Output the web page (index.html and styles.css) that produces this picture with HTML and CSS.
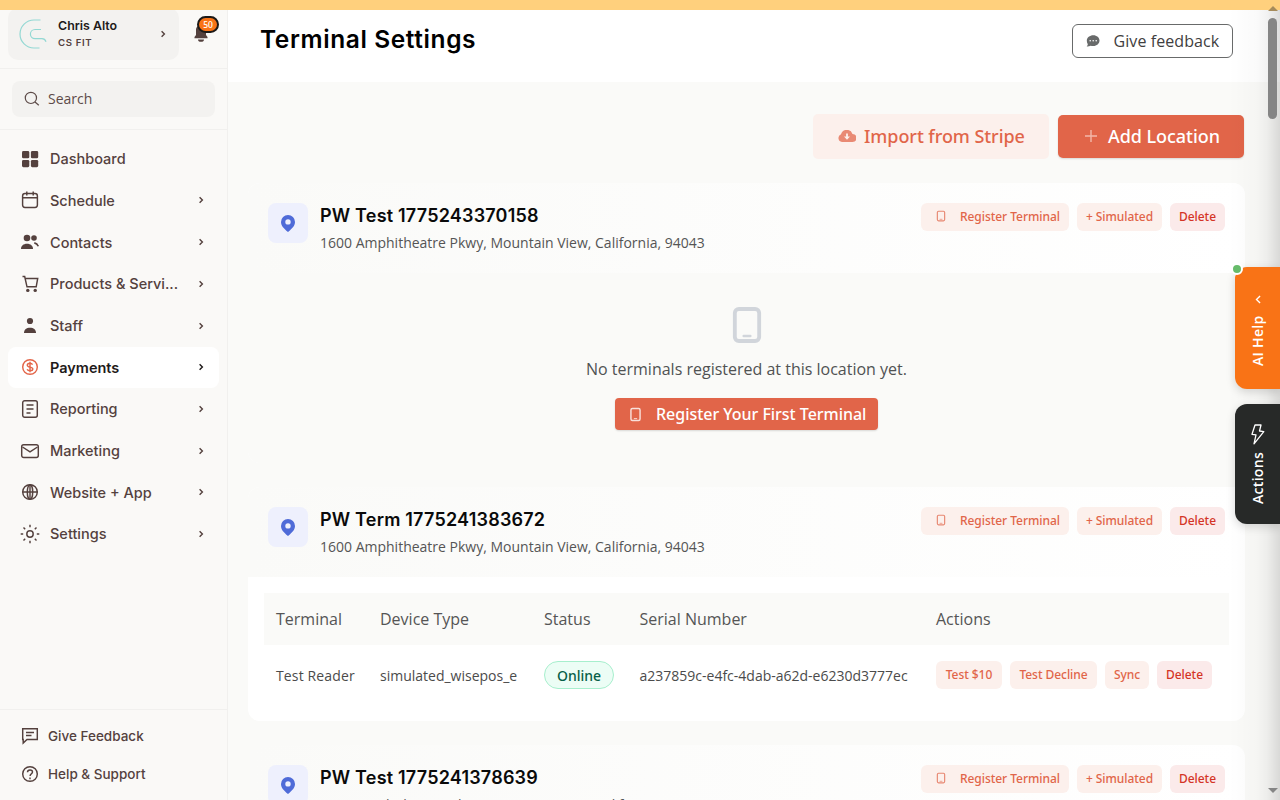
FILE: index.html
```
<!DOCTYPE html>
<html lang="en">
<head>
<meta charset="utf-8">
<title>Terminal Settings</title>
<link rel="stylesheet" href="styles.css">
</head>
<body>
<svg class="defs" aria-hidden="true">
  <symbol id="chev" viewBox="0 0 10 10"><path d="M3.6 2.2 6.4 5 3.6 7.8" fill="none" stroke="currentColor" stroke-width="1.4"/></symbol>
  <symbol id="tablet" viewBox="0 0 24 24"><rect x="4.7" y="2.4" width="14.600" height="19.200" rx="2.400" fill="none" stroke="currentColor" stroke-width="2.300"/><path d="M10 18.600h4" stroke="currentColor" stroke-width="1.500" stroke-linecap="round"/></symbol>
  <symbol id="pin" viewBox="0 0 14 17"><path fill-rule="evenodd" d="M7 0a7 7 0 0 0-7 7c0 3.600 2.400 6.200 7 10 4.600-3.800 7-6.400 7-10a7 7 0 0 0-7-7Zm0 4.200a2.700 2.700 0 1 1 0 5.400 2.700 2.700 0 0 1 0-5.400Z" fill="currentColor"/></symbol>
</svg>
<div class="banner"></div>
<div class="app">
  <aside class="sidebar">
    <div class="account">
      <div class="profile">
        <svg class="avatar" viewBox="0 0 30 30" fill="none" stroke="#93d8d3" stroke-width="1.200"><path d="M21.500 1H15a14 14 0 0 0 0 28h5.500"/><path d="M22 10.500h-6a4.600 4.600 0 0 0 0 9.200h7c2.500 0 3.500 1.500 4 3"/></svg>
        <div class="who"><b>Chris Alto</b><span>CS FIT</span></div>
        <svg class="chev"><use href="#chev"/></svg>
      </div>
      <div class="bell">
        <svg width="14" height="17" viewBox="0 0 14 17" fill="#54413e"><path d="M7 0c-3 0-5 2.200-5 5v5L.5 12v1.300h13V12L12 10V5c0-2.800-2-5-5-5ZM4 14.500h6a3 2.300 0 0 1-6 0Z"/></svg>
        <span class="count">50</span>
      </div>
    </div>
    <div class="searchwrap"><div class="search"><svg width="16" height="16" viewBox="0 0 16 16" fill="none" stroke="currentColor" stroke-width="1.200"><circle cx="6.900" cy="6.900" r="5.600"/><path d="m11 11 3.800 3.300"/></svg><span>Search</span></div></div>
    <nav class="nav">
      <a class="item"><svg viewBox="0 0 20 20"><g fill="currentColor"><rect x="2" y="2" width="7.300" height="7.300" rx="1.400"/><rect x="10.900" y="2" width="7.300" height="7.300" rx="1.400"/><rect x="2" y="10.900" width="7.300" height="7.300" rx="1.400"/><rect x="10.900" y="10.900" width="7.300" height="7.300" rx="1.400"/></g></svg><span>Dashboard</span></a>
      <a class="item"><svg viewBox="0 0 20 20"><rect x="2.600" y="3.500" width="14.800" height="14" rx="2.400"/><path d="M2.600 7.800h14.600M6.800 1.500v4M13.200 1.500v4"/></svg><span>Schedule</span><svg class="chev"><use href="#chev"/></svg></a>
      <a class="item"><svg viewBox="0 0 20 20"><g fill="currentColor" stroke="none"><circle cx="7" cy="6" r="3.300"/><circle cx="14" cy="6" r="2.800"/><path d="M1 17c0-3 2.300-5.200 6-5.200s6 2.200 6 5.200Z"/></g><path d="M14.300 10.900c2 .5 3.300 1.700 4 3.300" stroke-width="1.600"/></svg><span>Contacts</span><svg class="chev"><use href="#chev"/></svg></a>
      <a class="item"><svg viewBox="0 0 20 20"><path d="M2.500 2.500h2.200L7 12.800h9.200l1.500-8.300H5.200"/><g fill="currentColor" stroke="none"><circle cx="7.800" cy="16.400" r="1.700"/><circle cx="15.200" cy="16.400" r="1.700"/></g></svg><span>Products &amp; Servi...</span><svg class="chev"><use href="#chev"/></svg></a>
      <a class="item"><svg viewBox="0 0 20 20"><g fill="currentColor" stroke="none"><circle cx="10" cy="5" r="3.100"/><path d="M4 17c0-3.500 2.500-5.200 6-5.200s6 1.700 6 5.200Z"/></g></svg><span>Staff</span><svg class="chev"><use href="#chev"/></svg></a>
      <a class="item active"><svg viewBox="0 0 20 20"><circle cx="10" cy="10" r="7.300"/><path d="M10 4.800v10.400M12.600 7.600C12 6.700 11.200 6.300 10 6.300c-1.600 0-2.700.7-2.700 1.900 0 2.600 5.500 1.200 5.500 3.800 0 1.100-1.200 1.800-2.800 1.800-1.400 0-2.400-.5-2.900-1.500"/></svg><span>Payments</span><svg class="chev"><use href="#chev"/></svg></a>
      <a class="item"><svg viewBox="0 0 20 20"><rect x="2.700" y="1.700" width="14.600" height="16.600" rx="2"/><path d="M6.500 6h7M6.500 10h7M6.500 14h4"/></svg><span>Reporting</span><svg class="chev"><use href="#chev"/></svg></a>
      <a class="item"><svg viewBox="0 0 20 20"><rect x="1.700" y="3.700" width="16.600" height="12.800" rx="2"/><path d="m2.500 6 7.500 4.800L17.500 6"/></svg><span>Marketing</span><svg class="chev"><use href="#chev"/></svg></a>
      <a class="item"><svg viewBox="0 0 20 20"><circle cx="10" cy="10" r="7.300"/><ellipse cx="10" cy="10" rx="2.700" ry="7.300"/><path d="M2.700 10h14.600M10 2.700v14.600"/></svg><span>Website + App</span><svg class="chev"><use href="#chev"/></svg></a>
      <a class="item"><svg viewBox="0 0 20 20"><circle cx="10" cy="10" r="3.200"/><path d="M10 .7v2.500M10 16.800v2.500M.7 10h2.500M16.800 10h2.500M3.500 3.500l1.700 1.700M14.800 14.800l1.700 1.700M16.500 3.500l-1.700 1.700M5.200 14.800l-1.700 1.700"/></svg><span>Settings</span><svg class="chev"><use href="#chev"/></svg></a>
    </nav>
    <div class="foot">
      <a><svg viewBox="0 0 20 20"><path d="M2.700 2.700h14.600v10.800H7l-3.800 3.600v-3.600h-.5ZM6 6.500h8M6 9.500h5.500"/></svg><span>Give Feedback</span></a>
      <a><svg viewBox="0 0 20 20"><circle cx="10" cy="10" r="7.300"/><path d="M7.500 8.200C7.500 6.700 8.600 5.900 10 5.900s2.500.8 2.500 2.100c0 1.700-2.400 1.900-2.400 4M10 13.500v1.700"/></svg><span>Help &amp; Support</span></a>
    </div>
  </aside>
  <main class="main">
    <header class="top">
      <h1>Terminal Settings</h1>
      <button class="feedback"><svg width="14" height="12" viewBox="0 0 14 12"><path d="M7.300.3c3.500 0 6.200 2.300 6.200 5.300s-2.700 5.500-6.200 5.500c-1 0-1.900-.1-2.700-.4-1 .6-2.400.9-3.900.8.8-.7 1.100-1.500 1.100-2.200C1.100 8.300.8 7 .8 5.600.8 2.600 3.800.3 7.300.3Z" fill="#686a6a"/><g fill="#fff"><circle cx="4.200" cy="5.800" r=".8"/><circle cx="7.200" cy="5.800" r=".8"/><circle cx="10.200" cy="5.800" r=".8"/></g></svg><span>Give feedback</span></button>
    </header>
    <section class="content">
      <div class="tools">
        <button class="import"><svg width="18" height="12" viewBox="0 0 18 12"><path fill-rule="evenodd" d="M4 12a4 4 0 0 1-1-7.700A6 6 0 0 1 14.500 4a4 4 0 0 1 0 8ZM8.100 3.500v3H6l3 3.300 3-3.300H9.900v-3Z" fill="#e98a74"/></svg><span>Import from Stripe</span></button>
        <button class="add"><svg width="12" height="12" viewBox="0 0 12 12"><path d="M6 0v12M0 6h12" stroke="#f3b8aa" stroke-width="1.400"/></svg><span>Add Location</span></button>
      </div>
      <article class="card">
        <div class="cardhead">
          <div class="mark"><svg><use href="#pin"/></svg></div>
          <div class="place"><h2>PW Test 1775243370158</h2><p>1600 Amphitheatre Pkwy, Mountain View, California, 94043</p></div>
          <div class="acts"><button class="soft reg"><svg><use href="#tablet"/></svg>Register Terminal</button><button class="soft sim">+ Simulated</button><button class="soft del">Delete</button></div>
        </div>
        <div class="empty">
          <svg><use href="#tablet"/></svg>
          <p>No terminals registered at this location yet.</p>
          <button class="first"><svg><use href="#tablet"/></svg><span>Register Your First Terminal</span></button>
        </div>
      </article>
      <article class="card">
        <div class="cardhead">
          <div class="mark"><svg><use href="#pin"/></svg></div>
          <div class="place"><h2>PW Term 1775241383672</h2><p>1600 Amphitheatre Pkwy, Mountain View, California, 94043</p></div>
          <div class="acts"><button class="soft reg"><svg><use href="#tablet"/></svg>Register Terminal</button><button class="soft sim">+ Simulated</button><button class="soft del">Delete</button></div>
        </div>
        <div class="tablewrap">
          <div class="row head"><span>Terminal</span><span>Device Type</span><span>Status</span><span>Serial Number</span><span>Actions</span></div>
          <div class="row"><span class="reader">Test Reader</span><span>simulated_wisepos_e</span><span><i class="pill">Online</i></span><span>a237859c-e4fc-4dab-a62d-e6230d3777ec</span><span class="acts"><button class="soft t10">Test $10</button><button class="soft dec">Test Decline</button><button class="soft sync">Sync</button><button class="soft del">Delete</button></span></div>
        </div>
      </article>
      <article class="card">
        <div class="cardhead">
          <div class="mark"><svg><use href="#pin"/></svg></div>
          <div class="place"><h2>PW Test 1775241378639</h2><p>1600 Amphitheatre Pkwy, Mountain View, California, 94043</p></div>
          <div class="acts"><button class="soft reg"><svg><use href="#tablet"/></svg>Register Terminal</button><button class="soft sim">+ Simulated</button><button class="soft del">Delete</button></div>
        </div>
      </article>
    </section>
  </main>
</div>
<div class="edge"></div>
<div class="scroll"><i class="up"></i><i class="thumb"></i><i class="down"></i></div>
<div class="tab ai"><span>AI Help</span><svg width="9" height="9" viewBox="0 0 8 8"><path d="M2.600.8 5.800 4 2.600 7.200" fill="none" stroke="#fff" stroke-width="1.200"/></svg><i class="dot"></i></div>
<div class="tab dark"><span>Actions</span><svg class="bolt" width="14" height="21" viewBox="0 0 14 21"><path d="M4 1h6L8.500 7l4.300.6L3 19.800l2-9L1 10.300Z" fill="none" stroke="#fff" stroke-width="1.300" stroke-linejoin="round"/></svg></div>
</body>
</html>
```
FILE: styles.css
```
*{box-sizing:border-box}
body{margin:0;width:1280px;height:800px;overflow:hidden;position:relative;background:#fafaf8;font-family:"Open Sans","Noto Sans",sans-serif;color:#4b4b4b}
h1,h2,p{margin:0}
button{font-family:"Noto Sans",sans-serif;font-weight:500;border:0;margin:0;padding:0;display:flex;align-items:center;white-space:nowrap}
.defs{position:absolute;width:0;height:0}
.banner{position:absolute;inset:0 0 auto 0;height:10px;background:#ffd07d;z-index:5}
.app{display:flex;height:800px}
.sidebar{width:228px;flex:none;background:#faf9f7;border-right:1px solid #f1f0ee;display:flex;flex-direction:column;color:#54413e;font-family:Inter,sans-serif}
.account{height:69px;flex:none;border-bottom:1px solid #f1f0ee;padding:8px 0 0 8px;display:flex;gap:15px}
.profile{width:171px;height:52px;border-radius:10px;background:#f3f2f0;display:flex;align-items:center;padding:0 11px}
.avatar{width:30px;height:30px}
.who{margin-left:9px;flex:1;display:flex;flex-direction:column;gap:3px;padding-bottom:1px}
.who b{font-size:12.400px;line-height:16px;font-weight:600;color:#1f1b1a}
.who span{font-size:9.600px;line-height:12px;font-weight:600;letter-spacing:.65px}
.chev{width:10px;height:10px}
.bell{position:relative;padding-top:17px;height:40px}
.count{position:absolute;left:3px;top:8px;width:22px;height:17px;border:2px solid #1c1917;border-radius:9px;background:#f97316;color:#fff;font:500 8.500px/14px "Noto Sans",sans-serif;text-align:center}
.searchwrap{height:61px;flex:none;border-bottom:1px solid #f1f0ee;padding:12px}
.search{height:36px;width:203px;border-radius:8px;background:#f3f2f0;display:flex;align-items:center;gap:8px;padding-left:12px;font:14px "Open Sans",sans-serif;color:#5d4b48}
.search span{padding-bottom:2px}
.nav{padding:8.300px 8px 0;flex:1}
.item{display:flex;align-items:center;height:41px;margin-bottom:.7px;border-radius:8px;padding:0 13px 0 12px;font-size:14.500px;font-weight:500}
.item>svg:first-child,.foot svg{width:20px;height:20px;margin-right:10px;fill:none;stroke:currentColor;stroke-width:1.450}
.item>svg:first-child g{stroke:none}
.item span{flex:1;white-space:nowrap}
.active{background:#fff;color:#1f1b1a;font-weight:600}
.item.active>svg:first-child{color:#e3664a}
.foot{height:91px;flex:none;border-top:1px solid #f1f0ee;padding:7px 20px}
.foot a{display:flex;height:38px;align-items:center;font-size:13.500px;font-weight:500}
.foot span{padding-bottom:1px}
.foot svg{margin-right:8px}
.main{flex:1;min-width:0}
.top{height:82px;background:#fff;display:flex;justify-content:space-between;padding:24px 47px 0 32px}
.top h1{font:600 24.500px/30px Inter,sans-serif;letter-spacing:.6px;color:#000}
.feedback{width:161px;height:34px;border:1px solid #686a6a;border-radius:6px;background:#fff;padding-left:13px;gap:13.500px;font:16px "Open Sans",sans-serif;letter-spacing:.08px;color:#3f4040}
.content{padding:31px 35px 0 20px}
.tools{display:flex;justify-content:flex-end;align-items:center;gap:9px;padding-right:1px;height:46px;margin-bottom:24px}
.tools button{font-size:18px;letter-spacing:-.06px;border-radius:5px}
.tools .import{width:236px;height:45px;background:#fcf0ec;color:#e16549;padding-left:25px;gap:8px}
.tools .add{width:186px;height:43px;background:#e16549;color:#fff;padding-left:27px;gap:11px;box-shadow:0 1px 2px #0002}
.card{border-radius:12px;overflow:hidden;margin-bottom:24px;background:#fff}
.cardhead{height:90px;padding:20px;display:flex;background:linear-gradient(90deg,#fafaf8,#fff)}
.mark{width:40px;height:40px;border-radius:8px;background:#eef0fd;color:#4f6bd8;display:grid;place-items:center}
.mark svg{width:14px;height:17px}
.place{margin-left:12px;flex:1}
.place h2{font:600 18px/26px Inter,sans-serif;letter-spacing:.2px;color:#0a0a0a}
.place p{font-size:14px;line-height:20px;margin-top:4px;color:#555}
.acts{display:flex;gap:8px}
.soft{height:28px;border-radius:6px;background:#fcf0ec;color:#e16549;font-size:12px;letter-spacing:-.05px;justify-content:center;padding-bottom:2px}
.reg{width:148px;justify-content:flex-start;padding-left:14px}
.reg svg{width:12px;height:12px;margin-right:13px;opacity:.75}
.sim{width:85px}.del{width:55px;background:#fbeaea;color:#d43426}
.t10{width:66px}.dec{width:87px}.sync{width:44px}
.empty{height:190px;background:#fafaf8;display:flex;flex-direction:column;align-items:center;padding-top:32px}
.empty>svg{width:40px;height:40px;color:#d1d5db}
.empty p{font-size:16px;line-height:24px;margin:12px 0 17px;color:#505253}
.first{width:263px;height:32px;border-radius:4px;background:#e16549;color:#fff;font-size:16px;letter-spacing:-.03px;padding-left:13px;gap:13px;box-shadow:0 1px 2px #0002}
.first svg{width:15px;height:15px;opacity:.8}
.tablewrap{padding:16px}
.row{display:grid;grid-template-columns:104px 164px 95.500px 296.500px 1fr;padding-left:12px;height:60px;align-items:center;font-size:14px;color:#4b4b4b}
.row.head{height:52px;background:#fafaf8;font-size:16px;color:#555}
.reader{letter-spacing:.13px}
.pill{display:block;width:70px;height:28px;border:1px solid #a7efcd;border-radius:14px;background:#ecfdf5;color:#075f48;font:500 14px/28px "Noto Sans",sans-serif;text-align:center}
.edge{position:absolute;right:0;top:10px;bottom:0;width:52px;background:linear-gradient(90deg,#0000,#00000005 55%,#0000000d 75%,#00000022)}
.scroll{position:absolute;right:0;top:0;width:15px;height:800px;z-index:6}
.scroll i{position:absolute;left:3px}
.thumb{top:18px;width:9px;height:101px;border-radius:5px;background:#858585}
.up{top:6px;border:5px solid transparent;border-top:0;border-bottom-color:#a68b5b}
.down{top:788px;border:5px solid transparent;border-bottom:0;border-top-color:#858585}
.tab{position:absolute;right:0;width:45px;display:flex;align-items:center;writing-mode:vertical-rl;transform:rotate(180deg);color:#fff;font-size:14px;font-weight:600;letter-spacing:.3px;border-radius:0 12px 12px 0;box-shadow:0 -3px 10px #00000026;z-index:7}
.tab svg{position:relative;right:1px}
.bolt{transform:rotate(180deg)}
.ai{top:267px;height:122px;background:#f97316;padding-top:23px;gap:12px}
.dark{top:404px;height:120px;background:#272928;padding-top:20px;gap:7px}
.dot{position:absolute;right:-4px;bottom:-4px;width:12px;height:12px;border:2px solid #fff;border-radius:50%;background:#66bb6a}
```
